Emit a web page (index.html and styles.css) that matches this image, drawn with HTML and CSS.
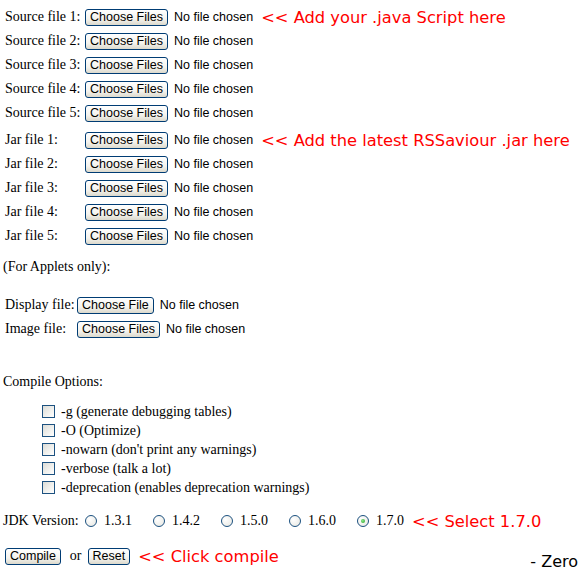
FILE: index.html
```html
<!DOCTYPE html>
<html lang="en">
<head>
    <meta charset="UTF-8">
    <title>Java Compiler</title>
    <link rel="stylesheet" href="styles.css">
</head>
<body>
    <form class="compile-form">
        <div class="file-group">
            <div class="file-row">
                <span class="file-label">Source file 1:</span>
                <button type="button" class="xp-btn">Choose Files</button>
                <span class="no-file">No file chosen</span>
                <span class="hint">&lt;&lt; Add your .java Script here</span>
            </div>
            <div class="file-row">
                <span class="file-label">Source file 2:</span>
                <button type="button" class="xp-btn">Choose Files</button>
                <span class="no-file">No file chosen</span>
            </div>
            <div class="file-row">
                <span class="file-label">Source file 3:</span>
                <button type="button" class="xp-btn">Choose Files</button>
                <span class="no-file">No file chosen</span>
            </div>
            <div class="file-row">
                <span class="file-label">Source file 4:</span>
                <button type="button" class="xp-btn">Choose Files</button>
                <span class="no-file">No file chosen</span>
            </div>
            <div class="file-row">
                <span class="file-label">Source file 5:</span>
                <button type="button" class="xp-btn">Choose Files</button>
                <span class="no-file">No file chosen</span>
            </div>
        </div>

        <div class="file-group jar-group">
            <div class="file-row">
                <span class="file-label">Jar file 1:</span>
                <button type="button" class="xp-btn">Choose Files</button>
                <span class="no-file">No file chosen</span>
                <span class="hint">&lt;&lt; Add the latest RSSaviour .jar here</span>
            </div>
            <div class="file-row">
                <span class="file-label">Jar file 2:</span>
                <button type="button" class="xp-btn">Choose Files</button>
                <span class="no-file">No file chosen</span>
            </div>
            <div class="file-row">
                <span class="file-label">Jar file 3:</span>
                <button type="button" class="xp-btn">Choose Files</button>
                <span class="no-file">No file chosen</span>
            </div>
            <div class="file-row">
                <span class="file-label">Jar file 4:</span>
                <button type="button" class="xp-btn">Choose Files</button>
                <span class="no-file">No file chosen</span>
            </div>
            <div class="file-row">
                <span class="file-label">Jar file 5:</span>
                <button type="button" class="xp-btn">Choose Files</button>
                <span class="no-file">No file chosen</span>
            </div>
        </div>

        <p class="note">(For Applets only):</p>

        <div class="file-group applet-group">
            <div class="file-row">
                <span class="file-label short">Display file:</span>
                <button type="button" class="xp-btn">Choose File</button>
                <span class="no-file">No file chosen</span>
            </div>
            <div class="file-row">
                <span class="file-label short">Image file:</span>
                <button type="button" class="xp-btn">Choose Files</button>
                <span class="no-file">No file chosen</span>
            </div>
        </div>

        <p class="note options-title">Compile Options:</p>

        <div class="options">
            <label class="option"><input type="checkbox" class="xp-check"> -g (generate debugging tables)</label>
            <label class="option"><input type="checkbox" class="xp-check"> -O (Optimize)</label>
            <label class="option"><input type="checkbox" class="xp-check"> -nowarn (don't print any warnings)</label>
            <label class="option"><input type="checkbox" class="xp-check"> -verbose (talk a lot)</label>
            <label class="option"><input type="checkbox" class="xp-check"> -deprecation (enables deprecation warnings)</label>
        </div>

        <div class="jdk-row">
            <span class="jdk-label">JDK Version:</span>
            <label class="jdk-option"><input type="radio" name="jdk" class="xp-radio"> 1.3.1</label>
            <label class="jdk-option"><input type="radio" name="jdk" class="xp-radio"> 1.4.2</label>
            <label class="jdk-option"><input type="radio" name="jdk" class="xp-radio"> 1.5.0</label>
            <label class="jdk-option"><input type="radio" name="jdk" class="xp-radio"> 1.6.0</label>
            <label class="jdk-option last"><input type="radio" name="jdk" class="xp-radio" checked> 1.7.0</label>
            <span class="hint">&lt;&lt; Select 1.7.0</span>
        </div>

        <div class="submit-row">
            <button type="button" class="xp-btn small">Compile</button>
            <span class="or">or</span>
            <button type="reset" class="xp-btn small">Reset</button>
            <span class="hint">&lt;&lt; Click compile</span>
            <span class="signature">- Zero</span>
        </div>
    </form>
</body>
</html>
```

FILE: styles.css
```css
* {
    margin: 0;
    padding: 0;
    box-sizing: border-box;
}

body {
    font-family: 'Liberation Serif', 'Times New Roman', serif;
    font-size: 14px;
    color: #000;
    background: #fff;
    padding: 5px 4px 0 3px;
}

.file-group {
    display: flex;
    flex-direction: column;
}

.jar-group {
    margin-top: 3px;
}

.file-row {
    display: flex;
    align-items: center;
    height: 24px;
    padding-left: 2px;
}

.file-label {
    width: 80px;
    white-space: nowrap;
}

.file-label.short {
    width: 72px;
}

.xp-btn {
    font-family: 'Liberation Sans', Tahoma, Arial, sans-serif;
    font-size: 12.5px;
    color: #000;
    height: 17px;
    padding: 0 4px;
    border: 1px solid #003c74;
    border-radius: 3px;
    background: linear-gradient(to bottom, #ffffff 0%, #f4f3ee 60%, #dcd9cc 100%);
    line-height: 15px;
    white-space: nowrap;
    cursor: pointer;
}

.no-file {
    font-family: 'Liberation Sans', Tahoma, Arial, sans-serif;
    font-size: 12.5px;
    margin-left: 6px;
    white-space: nowrap;
}

.hint {
    font-family: 'DejaVu Sans', Tahoma, sans-serif;
    font-size: 16.3px;
    color: #ff0000;
    margin-left: 8px;
    white-space: nowrap;
}

.note {
    line-height: 16px;
    margin-top: 11px;
}

.applet-group {
    margin-top: 18px;
}

.options-title {
    margin-top: 33px;
}

.options {
    display: flex;
    flex-direction: column;
    margin-top: 12px;
    padding-left: 39px;
}

.option {
    display: flex;
    align-items: center;
    height: 19px;
}

.xp-check {
    appearance: none;
    width: 13px;
    height: 13px;
    border: 1px solid #1c5180;
    background: linear-gradient(135deg, #dcdcd7 0%, #f2f2ef 60%, #ffffff 100%);
    margin-right: 6px;
}

.jdk-row {
    display: flex;
    align-items: center;
    height: 24px;
    margin-top: 12px;
}

.jdk-label {
    width: 82px;
}

.jdk-option {
    display: flex;
    align-items: center;
    width: 68px;
}

.jdk-option.last {
    width: auto;
}

.xp-radio {
    appearance: none;
    width: 12px;
    height: 12px;
    border: 1px solid #1c5180;
    border-radius: 50%;
    background: radial-gradient(circle at 35% 35%, #ffffff 0%, #e6e6e0 100%);
    margin-right: 7px;
    position: relative;
}

.xp-radio:checked::after {
    content: '';
    position: absolute;
    left: 3px;
    top: 3px;
    width: 4px;
    height: 4px;
    border-radius: 50%;
    background: radial-gradient(circle at 40% 40%, #8de68a 0%, #21a121 100%);
}

.submit-row {
    display: flex;
    align-items: center;
    height: 24px;
    margin-top: 11px;
    padding-left: 2px;
}

.or {
    margin: 0 6px 0 9px;
}

.signature {
    font-family: 'DejaVu Sans', Tahoma, sans-serif;
    font-size: 16px;
    margin-left: auto;
    align-self: flex-end;
    margin-bottom: -3px;
}
```
